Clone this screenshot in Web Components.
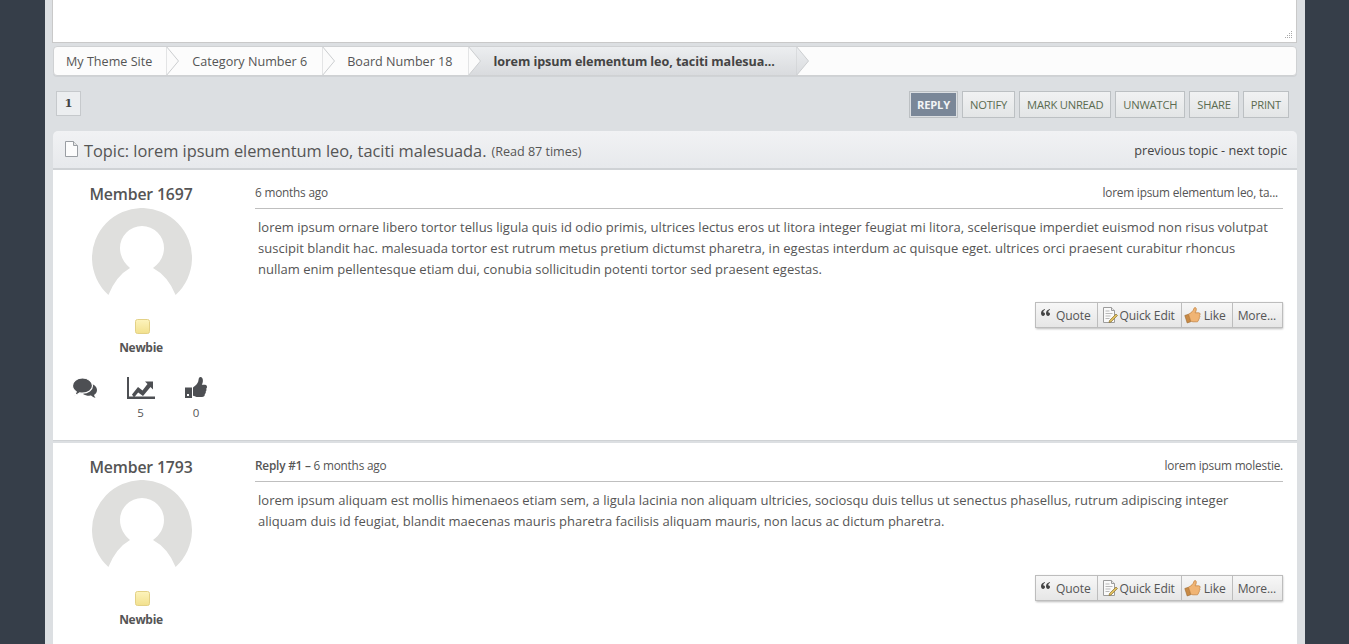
<!DOCTYPE html>
<html lang="en">
<head>
<meta charset="utf-8">
<title>Topic</title>
<style>
    html, body { margin: 0; height: 644px; overflow: hidden; background: #363e49; }
    body { font-family: "Open Sans", "Liberation Sans", sans-serif; color: #555; }
</style>
</head>
<body>
<forum-page>
    <editor-box></editor-box>
    <bread-crumbs>
        <crumb-item>My Theme Site</crumb-item>
        <crumb-item>Category Number 6</crumb-item>
        <crumb-item>Board Number 18</crumb-item>
        <crumb-item active>lorem ipsum elementum leo, taciti malesua...</crumb-item>
    </bread-crumbs>
    <page-buttons>
        <button-strip>
            <strip-button primary>REPLY</strip-button>
            <strip-button>NOTIFY</strip-button>
            <strip-button>MARK UNREAD</strip-button>
            <strip-button>UNWATCH</strip-button>
            <strip-button>SHARE</strip-button>
            <strip-button>PRINT</strip-button>
        </button-strip>
    </page-buttons>
    <topic-bar></topic-bar>
    <forum-post name="Member 1697" subject="lorem ipsum elementum leo, ta..." inset stats>
        <span slot="when">6 months ago</span>
        lorem ipsum ornare libero tortor tellus ligula quis id odio primis, ultrices lectus eros ut litora integer feugiat mi litora, scelerisque imperdiet euismod non risus volutpat<br>
        suscipit blandit hac. malesuada tortor est rutrum metus pretium dictumst pharetra, in egestas interdum ac quisque eget. ultrices orci praesent curabitur rhoncus<br>
        nullam enim pellentesque etiam dui, conubia sollicitudin potenti tortor sed praesent egestas.
    </forum-post>
    <forum-post name="Member 1793" subject="lorem ipsum molestie.">
        <span slot="when"><b style="font-weight:600">Reply #1 –</b> 6 months ago</span>
        lorem ipsum aliquam est mollis himenaeos etiam sem, a ligula lacinia non aliquam ultricies, sociosqu duis tellus ut senectus phasellus, rutrum adipiscing integer<br>
        aliquam duis id feugiat, blandit maecenas mauris pharetra facilisis aliquam mauris, non lacus ac dictum pharetra.
    </forum-post>
</forum-page>

<script>
// small helper, every element just sets its shadow html once
class ShadowEl extends HTMLElement {
    constructor() {
        super();
        this.attachShadow({ mode: 'open' });
    }
    connectedCallback() {
        this.shadowRoot.innerHTML = this.markup();
    }
}

class ForumPage extends ShadowEl {
    markup() {
        return `<style>
            :host { display: block; width: 1244px; margin-left: 45px; padding: 0 8px; background: #dcdfe2; height: 644px; overflow: hidden; }
        </style><slot></slot>`;
    }
}

class EditorBox extends ShadowEl {
    markup() {
        return `<style>
            :host { display: flex; justify-content: flex-end; align-items: flex-end; height: 43px; background: #fff; border: 1px solid #c9c9c9; border-top: 0; margin-left: -1px; padding: 0 3px 3px 0; box-sizing: border-box; }
        </style>
        <svg width="9" height="9" viewBox="0 0 9 9"><g fill="#a9a9a9"><rect x="7" y="1" width="1" height="1"/><rect x="7" y="3" width="1" height="1"/><rect x="5" y="3" width="1" height="1"/><rect x="7" y="5" width="1" height="1"/><rect x="5" y="5" width="1" height="1"/><rect x="3" y="5" width="1" height="1"/><rect x="7" y="7" width="1" height="1"/><rect x="5" y="7" width="1" height="1"/><rect x="3" y="7" width="1" height="1"/><rect x="1" y="7" width="1" height="1"/></g></svg>`;
    }
}

class BreadCrumbs extends ShadowEl {
    markup() {
        return `<style>
            :host { display: flex; height: 28px; margin-top: 3px; background: #fcfcfc; border: 1px solid #cfd1d3; border-radius: 4px; overflow: hidden; box-shadow: 0 1px 0 #d0d3d6; }
        </style><slot></slot>`;
    }
}

class CrumbItem extends ShadowEl {
    markup() {
        const active = this.hasAttribute('active');
        const fill = active ? 'url(#g)' : '#fbfbfb';
        return `<style>
            :host { display: flex; height: 28px; flex: none; font-size: 12.6px; color: ${active ? '#444' : '#555'}; font-weight: ${active ? 700 : 400}; }
            .t { line-height: 30px; padding: 0 ${active ? '21px 0 26px' : '15px 0 25px'}; white-space: nowrap; background: ${active ? 'linear-gradient(#eceef0,#d9dbde)' : 'none'}; letter-spacing: ${active ? '-0.08px' : '0'}; }
            :host(:first-child) .t { padding-left: 12px; }
            :host(:first-child) svg { margin: 0 -12px 0 -1px; }
            svg { flex: none; margin-right: -13px; position: relative; z-index: 1; }
        </style>
        <div class="t"><slot></slot></div>
        <svg width="13" height="28" viewBox="0 0 13 28">
            <defs><linearGradient id="g" x1="0" y1="0" x2="0" y2="1"><stop offset="0" stop-color="#eceef0"/><stop offset="1" stop-color="#d9dbde"/></linearGradient></defs>
            <path d="M0 -1 L12.5 14 L0 29 Z" fill="${fill}" stroke="#cbcdcf"/>
        </svg>`;
    }
}

class PageButtons extends ShadowEl {
    markup() {
        return `<style>
            :host { display: flex; justify-content: space-between; align-items: flex-start; height: 27px; padding: 15px 8px 13px 3px; }
            .page { width: 25px; height: 25px; box-sizing: border-box; border: 1px solid #c6c9cc; background: #eceef0; font: 700 11.5px/23px "DejaVu Serif", serif; color: #444; text-align: center; }
        </style>
        <div class="page">1</div><slot></slot>`;
    }
}

class ButtonStrip extends ShadowEl {
    markup() {
        return `<style>:host { display: flex; gap: 4px; }</style><slot></slot>`;
    }
}

class StripButton extends ShadowEl {
    markup() {
        const primary = this.hasAttribute('primary');
        return `<style>
            :host { display: block; height: 27px; box-sizing: border-box; padding: 0 7px; border: 1px solid #bcc0c3; font-size: 11.2px; line-height: 26px; letter-spacing: -0.22px;
                ${primary
                    ? 'background: #7a8798; color: #f1f3f5; font-weight: 700; box-shadow: inset 0 0 0 1px #dcdfe2; '
                    : 'background: linear-gradient(#f1f2f3,#e3e5e6); color: #5b6b50;'} }
        </style><slot></slot>`;
    }
}

class TopicBar extends ShadowEl {
    markup() {
        return `<style>
            :host { display: flex; justify-content: space-between; align-items: center; height: 37px; padding: 0 10px 0 12px; background: linear-gradient(#f1f2f4,#e7e9ec); border-radius: 5px 5px 0 0; border-bottom: 2px solid #cfd2d5; }
            h3 { margin: 1px 0 0; display: flex; align-items: center; font-weight: 400; font-size: 16.4px; color: #555; letter-spacing: -0.02px; }
            svg { margin: -3px 6px 0 0; }
            small { font-size: 12.6px; margin: 2px 0 0 5px; }
            nav { font-size: 12.7px; color: #444; }
        </style>
        <h3><svg width="13" height="16" viewBox="0 0 13 16"><path d="M.5.5h8l4 4v11H.5z" fill="#fcfcfc" stroke="#9a9ea3"/><path d="M8.5.5v4h4" fill="#e4e4e4" stroke="#9a9ea3"/></svg>Topic: lorem ipsum elementum leo, taciti malesuada.<small>(Read 87 times)</small></h3>
        <nav>previous topic - next topic</nav>`;
    }
}

class ForumPost extends ShadowEl {
    markup() {
        const stats = this.hasAttribute('stats');
        const inset = this.hasAttribute('inset') ? 5 : 0;
        return `<style>
            :host { display: block; height: 270px; margin-bottom: 2px; background: #fff; border-bottom: 1px solid #cfd2d5; }
            .row { display: flex; }
            .side { width: 178px; flex: none; display: flex; flex-direction: column; align-items: center; padding-top: 14px; }
            .name { font-size: 15.8px; font-weight: 600; color: #555; line-height: 20px; letter-spacing: -0.15px; margin-right: 2px; }
            .avatar { display: block; margin-top: ${stats ? 4 : 3}px; }
            .rank { display: block; margin: 23px 0 0 1px; }
            .title { font-size: 12px; font-weight: 700; margin: 5px 2px 0 0; color: #555; line-height: 16px; letter-spacing: -0.3px; }
            .stats { display: flex; align-self: stretch; justify-content: center; margin-top: 21px; padding-right: 2px; }
            .stat { display: flex; flex-direction: column; align-items: center; font-size: 11.5px; width: 55px; color: #555; }
            .stat svg { display: block; height: 22px; margin-bottom: 6px; }
            .main { flex: 1; margin: 0 14px 0 24px; padding-top: 12px; }
            .head { display: flex; justify-content: space-between; align-items: flex-start; height: 26px; border-bottom: 1px solid #bfbfbf; font-size: 11.8px; line-height: 20px; letter-spacing: -0.2px; color: #555; }
            .subject { margin-right: ${inset}px; }
            .msg { height: 85px; padding: 8px 0 0 3px; font-size: 13px; line-height: 21px; color: #555; letter-spacing: 0.017px; white-space: nowrap; }
            .acts { display: flex; justify-content: flex-end; }
        </style>
        <div class="row">
            <div class="side">
                <div class="name">${this.getAttribute('name')}</div>
                <svg class="avatar" width="100" height="88" viewBox="0 0 100 88">
                    <path d="M16.400 87A50 50 0 1 1 83.600 87Q76 68 61 60C68 55 72 48 72 40A22 22 0 0 0 28 40C28 48 32 55 38 60Q24 68 16.400 87Z" fill="#dfdfdd"/>
                </svg>
                <svg class="rank" width="16" height="16" viewBox="0 0 16 16"><defs><linearGradient id="y" x1="0" y1="0" x2="0" y2="1"><stop offset="0" stop-color="#fdf4bd"/><stop offset="1" stop-color="#f2e08d"/></linearGradient></defs><rect x=".5" y=".5" width="14" height="14" rx="2" fill="url(#y)" stroke="#e3d186"/></svg>
                <div class="title">Newbie</div>
                ${stats ? `<div class="stats">
                    <div class="stat" style="width:54px"><svg width="25" viewBox="0 0 25 22" style="margin-right:2px">
                        <path d="M17 6.500C21.500 6.500 25 9.500 25 13c0 2.200-1.200 3.900-3 5 .3 1 .8 2 1.500 3-1.700-.5-3.200-1.300-4.500-2.400-3 .4-6-.3-8-1.700" fill="#4d4f53"/>
                        <path d="M10.500 1C4.800 1 .5 4.600 .5 8.800c0 2.500 1.500 4.600 3.700 6-.3 1.300-1 2.400-1.900 3.400 2-.3 3.800-1.100 5.300-2.300 1 .2 1.900.3 2.900.3 5.700 0 10-3.400 10-7.400S16.200 1 10.500 1z" fill="#4d4f53" stroke="#fff" stroke-width="1.200"/>
                    </svg></div>
                    <div class="stat" style="width:56px"><svg width="28" viewBox="0 0 28 22"><path d="M0 0h2v19.500h26V22H0z" fill="#4d4f53"/><path d="M5 17.500l6-7.500 4.500 3.500 5-6.500-2.500-2.500h8v8l-2.500-2.500-7.500 9-4.800-3.500-4.200 5z" fill="#4d4f53"/></svg>5</div>
                    <div class="stat"><svg width="22" viewBox="0 0 22 22"><path d="M0 10.500h7V21H0z" fill="#4d4f53"/><rect x="2" y="17" width="2" height="2" fill="#fff"/><path d="M8 10.500C10.500 8.500 13 7 13.500 3c.2-2 .8-3 2-3 1.800 0 2.800 2.500 2.300 5-.2 1-.6 2-1 2.800h3.200c1.500 0 2 1.200 2 2.200 0 .8-.3 1.400-.8 1.800.5 1 .3 2.200-.5 2.800.3 1 0 2.100-.9 2.600.1 1.700-1 2.800-2.800 2.800h-4c-2 0-3.500-1-5-1.300z" fill="#4d4f53"/></svg>0</div>
                </div>` : ''}
            </div>
            <div class="main">
                <div class="head"><slot name="when"></slot><span class="subject">${this.getAttribute('subject')}</span></div>
                <div class="msg"><slot></slot></div>
                <div class="acts"><quick-buttons></quick-buttons></div>
            </div>
        </div>`;
    }
}

class QuickButtons extends ShadowEl {
    markup() {
        return `<style>
            :host { display: flex; height: 26px; font-size: 12.1px; color: #555; letter-spacing: -0.15px; box-shadow: 0 1px 2px #bbb; }
            div { display: flex; align-items: center; box-sizing: border-box; height: 26px; border: 1px solid #bdbdbd; background: linear-gradient(#f7f7f7,#e6e6e6); padding: 0 6px; margin-left: -1px; }
        </style>
        <div style="padding-left:5px"><svg width="9" height="7" viewBox="0 0 9 7" style="margin:-5px 6px 0 0"><path d="M4 0C1.500.600 0 2.300 0 4.300 0 5.900.900 7 2.100 7 3.200 7 4 6.200 4 5.100 4 4 3.200 3.300 2.200 3.300 2.300 2.300 3 1.300 4 .8zM9 0C6.500.600 5 2.300 5 4.300 5 5.900 5.900 7 7.100 7 8.200 7 9 6.200 9 5.100 9 4 8.200 3.300 7.200 3.300 7.300 2.300 8 1.300 9 .8z" fill="#444"/></svg>Quote</div>
        <div style="padding-left:4px"><svg width="16" height="18" viewBox="0 0 16 18" style="margin-right:2px"><path d="M1.500 1.500h8l3 3v12h-11z" fill="#fafafa" stroke="#9c9c9c"/><path d="M9.500 1.500v3h3" fill="#e8e8e8" stroke="#9c9c9c"/><path d="M3.500 5h4M3.500 7.500h7M3.500 10h5M3.500 12.500h4" stroke="#b9b9b9"/><path d="M7.500 14.500l6.500-6.500 1.500 1.500-6.500 6.500-2 .5z" fill="#e0c060" stroke="#8a7238" stroke-width=".7"/></svg>Quick Edit</div>
        <div style="padding-left:2px"><svg width="17" height="18" viewBox="0 0 17 18" style="margin-right:3px"><path d="M.8 9.500l3.700-1.300 2.300 7.500-3.600 1.300z" fill="#c98a45" stroke="#9a6a30" stroke-width=".6"/><path d="M4.500 8.200C7 7 9.500 5 10 2.300c.2-1 2.200-1.100 2.300.6.100 1.500-.5 2.900-1.200 3.900h3.600c1.700 0 1.800 2 .7 2.500.9.600.7 2-.3 2.400.5.900.1 1.900-.8 2.200.2 1-.4 1.900-1.500 1.900H9c-1 0-1.500-.4-2.200-.7z" fill="#f0b474" stroke="#c07f3c" stroke-width=".7"/></svg>Like</div>
        <div style="padding-left:5px">More...</div>`;
    }
}

customElements.define('forum-page', ForumPage);
customElements.define('editor-box', EditorBox);
customElements.define('bread-crumbs', BreadCrumbs);
customElements.define('crumb-item', CrumbItem);
customElements.define('page-buttons', PageButtons);
customElements.define('button-strip', ButtonStrip);
customElements.define('strip-button', StripButton);
customElements.define('topic-bar', TopicBar);
customElements.define('forum-post', ForumPost);
customElements.define('quick-buttons', QuickButtons);
</script>
</body>
</html>
